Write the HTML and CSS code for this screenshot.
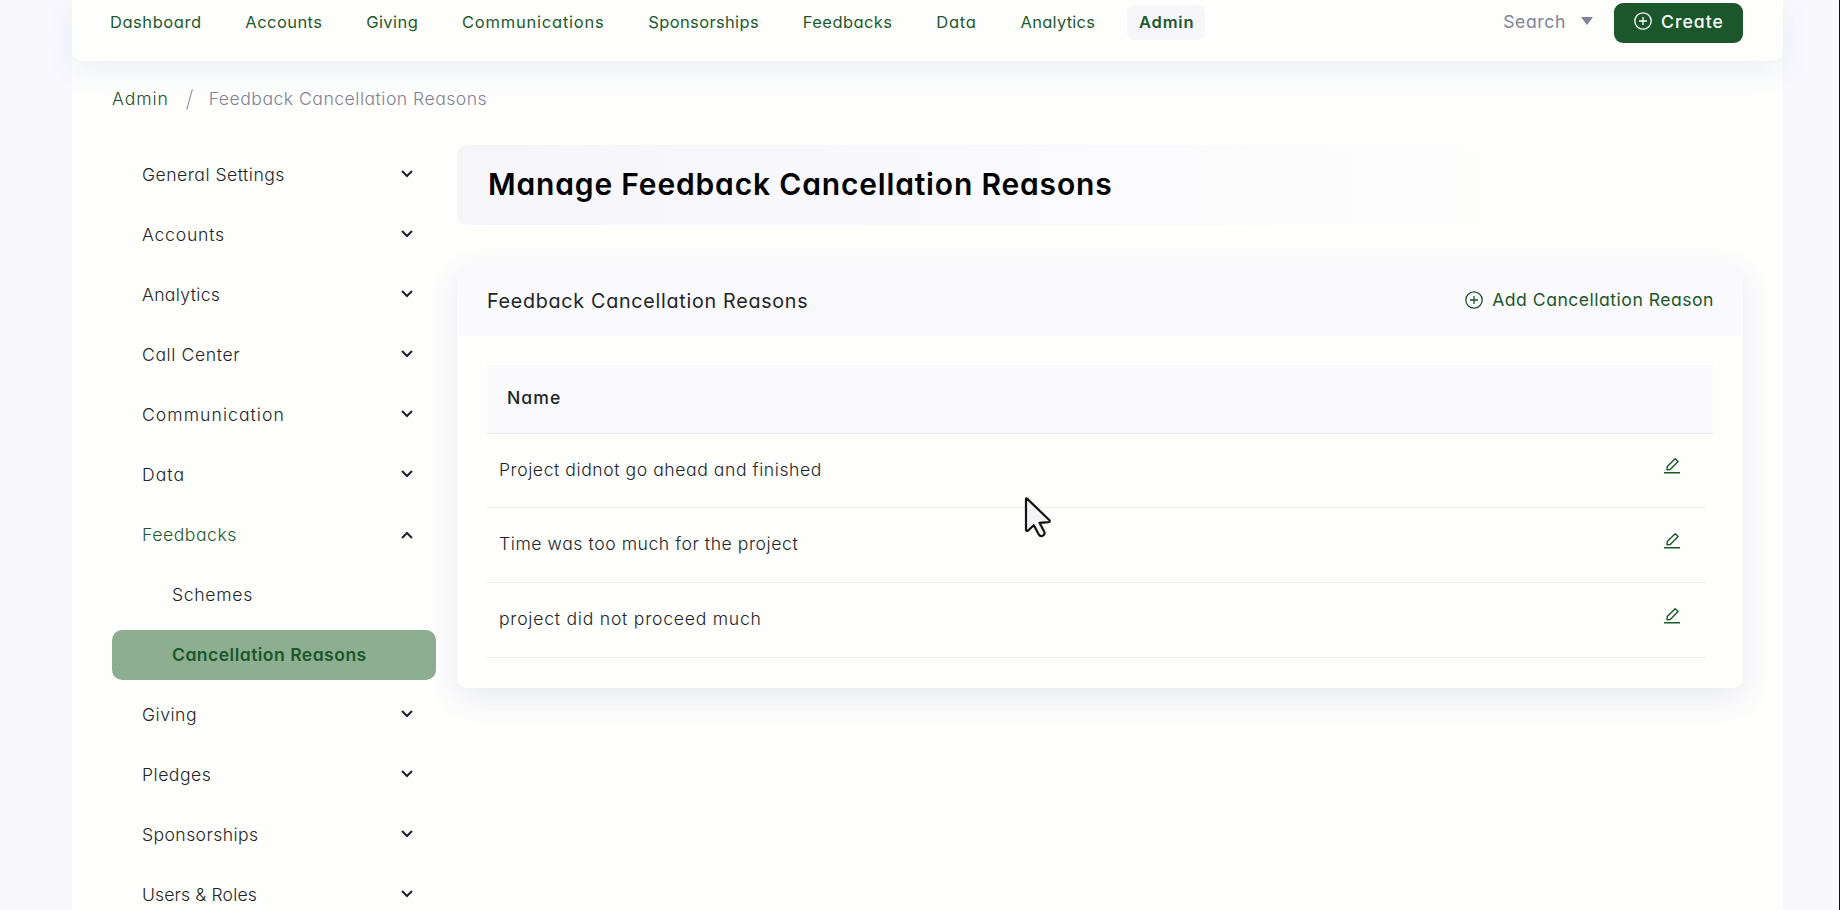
FILE: index.html
```html
<!DOCTYPE html>
<html lang="en">
<head>
<meta charset="utf-8">
<title>Manage Feedback Cancellation Reasons</title>
<link rel="stylesheet" href="styles.css">
</head>
<body>
<svg class="defs" width="0" height="0" aria-hidden="true">
  <symbol id="plus-circle" viewBox="0 0 18 18"><circle cx="9" cy="9" r="8.2" fill="none" stroke="currentColor" stroke-width="1.3"/><path d="M9 5v8M5 9h8" fill="none" stroke="currentColor" stroke-width="1.3"/></symbol>
  <symbol id="chevron" viewBox="0 0 14 10"><path d="M2 2l5 5 5-5" fill="none" stroke="currentColor" stroke-width="2.1"/></symbol>
  <symbol id="edit" viewBox="0 0 16 16"><path d="M0 14.7h16" fill="none" stroke="currentColor" stroke-width="1.5"/><path d="M3 11.7l.2-3.2 8-7.8 2.9 2.8-7.9 8z" fill="none" stroke="currentColor" stroke-width="1.4" stroke-linejoin="round"/></symbol>
</svg>
<div class="shell">
  <header class="topbar">
    <nav class="nav">
      <a class="ls-83">Dashboard</a>
      <a class="ls-71">Accounts</a>
      <a class="ls-71">Giving</a>
      <a class="ls-106">Communications</a>
      <a class="ls-63">Sponsorships</a>
      <a class="ls-71">Feedbacks</a>
      <a class="ls-106">Data</a>
      <a class="ls-54">Analytics</a>
      <a class="current ls-106">Admin</a>
    </nav>
    <div class="actions">
      <span class="search ls-91">Search</span>
      <svg class="caret" viewBox="0 0 12 8"><path d="M0 0h12L6 8z" fill="currentColor"/></svg>
      <button class="create"><svg class="plus"><use href="#plus-circle"/></svg><span class="ls-134">Create</span></button>
    </div>
  </header>

  <div class="crumbs"><a class="ls-121">Admin</a><svg class="slash" viewBox="0 0 7 21"><path d="M6.3 .5L.8 20.5" stroke="currentColor" fill="none"/></svg><span class="ls-79">Feedback Cancellation Reasons</span></div>

  <div class="body">
    <aside class="side">
      <a class="item"><span class="ls-79">General Settings</span><svg><use href="#chevron"/></svg></a>
      <a class="item"><span class="ls-106">Accounts</span><svg><use href="#chevron"/></svg></a>
      <a class="item"><span class="ls-63">Analytics</span><svg><use href="#chevron"/></svg></a>
      <a class="item"><span class="ls-91">Call Center</span><svg><use href="#chevron"/></svg></a>
      <a class="item"><span class="ls-134">Communication</span><svg><use href="#chevron"/></svg></a>
      <a class="item"><span class="ls-134">Data</span><svg><use href="#chevron"/></svg></a>
      <a class="item open"><span class="ls-83">Feedbacks</span><svg><use href="#chevron"/></svg></a>
      <a class="item sub"><span class="ls-98">Schemes</span></a>
      <a class="item sub active"><span class="ls-75">Cancellation Reasons</span></a>
      <a class="item"><span class="ls-79">Giving</span><svg><use href="#chevron"/></svg></a>
      <a class="item"><span class="ls-79">Pledges</span><svg><use href="#chevron"/></svg></a>
      <a class="item"><span class="ls-71">Sponsorships</span><svg><use href="#chevron"/></svg></a>
      <a class="item"><span class="ls-43">Users &amp; Roles</span><svg><use href="#chevron"/></svg></a>
    </aside>

    <main class="main">
      <h1 class="title ls-134">Manage Feedback Cancellation Reasons</h1>
      <section class="card">
        <div class="card-head">
          <h2 class="ls-106">Feedback Cancellation Reasons</h2>
          <a class="add"><svg class="plus"><use href="#plus-circle"/></svg><span class="ls-79">Add Cancellation Reason</span></a>
        </div>
        <div class="table">
          <div class="thead ls-134">Name</div>
          <div class="row"><span class="ls-86">Project didnot go ahead and finished</span><svg><use href="#edit"/></svg></div>
          <div class="row"><span class="ls-86">Time was too much for the project</span><svg><use href="#edit"/></svg></div>
          <div class="row"><span class="ls-106">project did not proceed much</span><svg><use href="#edit"/></svg></div>
        </div>
      </section>
    </main>
  </div>
</div>
<div class="edge"></div>
<svg class="cursor" viewBox="0 0 28 42"><path d="M2 2.2Q2 .8 3.3 1.9L25.5 23.2Q26.3 24.8 24.8 25.2L15.5 25.8 20.2 34.6Q21.3 37.2 19.2 38.5 16.4 40 14.7 37.3L9.8 28.3 4.2 33.5Q2 34.8 2 32.4Z" fill="#f4f4f6" stroke="#121212" stroke-width="2.2" stroke-linejoin="round"/></svg>
</body>
</html>
```
FILE: styles.css
```css
* { box-sizing: border-box; }
body {
  margin: 0;
  height: 910px;
  overflow: hidden;
  position: relative;
  background: #f9f8fd;
  color: #212529;
  font: 300 17.6px/24px Inter, "Open Sans", sans-serif;
  font-feature-settings: "cv11";
}
.defs { position: absolute; }
.shell {
  width: 1711px;
  height: 910px;
  margin-left: 72px;
  background: #fefefd;
}

.topbar {
  height: 61px;
  padding: 3px 40px 0 38px;
  display: flex;
  justify-content: space-between;
  align-items: flex-start;
  background: #fefefd;
  border-radius: 0 0 10px 10px;
  box-shadow: 0 10px 30px rgba(60, 90, 180, .09);
}
.nav { display: flex; gap: 43.8px; padding-top: 2px; }
.nav a { font-size: 16.5px; font-weight: 400; line-height: 35px; color: #1d5a2d; white-space: nowrap; }
.nav .current {
  font-weight: 600;
  margin-left: -12px;
  padding: 0 11px 0 12px;
  background: #f7f6fa;
  border-radius: 8px;
}
.actions { display: flex; align-items: flex-start; }
.search { font-weight: 400; color: #7f8299; line-height: 38px; }
.caret { width: 12px; height: 8px; margin: 14px 21px 0 15px; color: #7f8299; }
.create {
  width: 129px;
  height: 40px;
  padding: 0 0 2px 20px;
  border: 0;
  border-radius: 9px;
  display: flex;
  align-items: center;
  gap: 9px;
  background: #1c572b;
  color: #fff;
  font: 500 17.6px/24px Inter, "Open Sans", sans-serif;
  font-feature-settings: "cv11";
}
.plus { width: 18px; height: 18px; flex: none; }
.create .plus { margin-bottom: 2px; }

.crumbs { display: flex; align-items: center; height: 24px; margin-top: 26px; padding-left: 40px; color: #7f8299; }
.crumbs a { color: #1d4f2a; }
.slash { width: 7px; height: 21px; margin: 0 16px 0 17px; }

.body { display: flex; gap: 21px; padding: 34px 40px 0; }
.side { width: 324px; padding-top: 5px; display: flex; flex-direction: column; gap: 10px; flex: none; }
.item {
  height: 50px;
  flex: none;
  padding: 0 22px 0 30px;
  display: flex;
  align-items: center;
  justify-content: space-between;
  border-radius: 10px;
}
.item svg { width: 14px; height: 10px; margin-bottom: 3px; }
.open span { color: #1d5a2d; }
.open svg { transform: rotate(180deg); margin-bottom: 0; }
.sub { padding-left: 60px; }
.active { background: #8dae91; color: #1c572b; font-weight: 600; }

.main { flex: 1; }
.title {
  margin: 0;
  height: 80px;
  padding-left: 31px;
  border-radius: 10px;
  font-size: 30px;
  font-weight: 600;
  line-height: 79px;
  color: #000;
  background: linear-gradient(90deg, #f6f5fa, #faf9fc 45%, #fcfcfd 62%, #fefefd 84%);
}
.card {
  margin-top: 39px;
  height: 424px;
  border-radius: 10px;
  overflow: hidden;
  background: #fefefd;
  box-shadow: 0 10px 30px rgba(60, 70, 150, .11);
}
.card-head {
  height: 72px;
  padding: 0 29px 0 30px;
  display: flex;
  align-items: center;
  justify-content: space-between;
  background: #fafafd;
}
.card-head h2 { margin: 1px 0 0; font-size: 19.7px; font-weight: 400; }
.add { display: flex; align-items: center; gap: 9px; font-weight: 400; color: #1c572b; }
.table { padding: 29px 30px 0; }
.thead {
  height: 69px;
  padding-left: 20px;
  font-weight: 500;
  line-height: 66px;
  background: #fafafc;
  border-bottom: 1px solid #e8e8ea;
}
.row {
  height: 75px;
  margin-right: 7px;
  padding: 0 26px 0 12px;
  display: flex;
  align-items: center;
  justify-content: space-between;
  border-bottom: 1px solid #efeff1;
}
.row:nth-child(2) { height: 74px; }
.row span { margin-bottom: 2px; }
.row svg { width: 16px; height: 16px; margin-bottom: 9px; color: #1c572b; }

.edge { position: absolute; right: 0; top: 0; width: 1px; height: 910px; background: #111; }
.cursor { position: absolute; left: 1023.5px; top: 497px; width: 28px; height: 42px; }

/* tracking steps: a base in hundredths of a pixel, eased as the type grows */
.ls-43 { letter-spacing: calc(.43px - .017em); }
.ls-54 { letter-spacing: calc(.54px - .017em); }
.ls-63 { letter-spacing: calc(.63px - .017em); }
.ls-71 { letter-spacing: calc(.71px - .017em); }
.ls-75 { letter-spacing: calc(.75px - .017em); }
.ls-79 { letter-spacing: calc(.79px - .017em); }
.ls-83 { letter-spacing: calc(.83px - .017em); }
.ls-86 { letter-spacing: calc(.86px - .017em); }
.ls-91 { letter-spacing: calc(.91px - .017em); }
.ls-98 { letter-spacing: calc(.98px - .017em); }
.ls-106 { letter-spacing: calc(1.06px - .017em); }
.ls-121 { letter-spacing: calc(1.21px - .017em); }
.ls-134 { letter-spacing: calc(1.34px - .017em); }
```
